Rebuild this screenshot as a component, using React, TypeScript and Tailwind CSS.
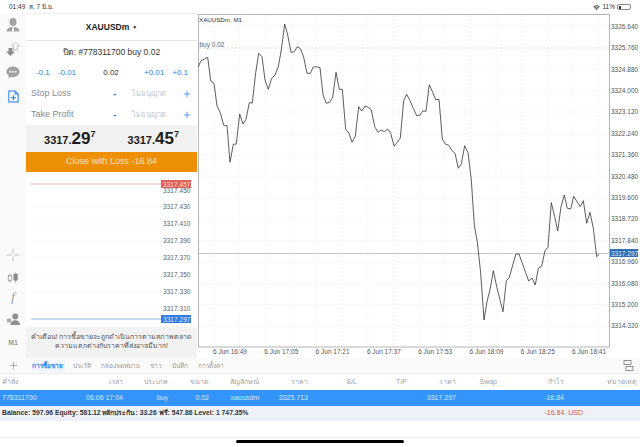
import React from 'react';
import { Plus, Wifi } from 'lucide-react';

const SANS = 'font-["Liberation_Sans",_"Noto_Sans",_sans-serif]';

// trace of the M1 line, read off the picture in three pieces
const LINE_A = [[10,200],[18,182],[28,178],[38,172],[47,242],[57,250],[66,318],[76,338],[86,376],[96,377],[105,487],[115,433],[124,432],[134,342],[144,372],[153,358],[163,308],[172,309],[182,218],[191,160],[201,170],[210,240],[220,268],[230,235],[240,225],[250,200],[259,150],[269,72],[278,105],[288,157],[298,155],[307,140],[317,147],[326,172],[336,220],[346,220],[355,201],[365,200],[375,203],[384,285],[394,310],[404,307],[413,292],[423,217],[433,268],[442,268],[452,388],[462,400],[471,427],[481,408],[491,320],[500,333],[510,318],[520,322],[529,330],[539,380],[549,397],[558,390],[568,395],[578,387],[587,400],[597,438],[607,427],[616,414],[626,302],[635,283],[645,302],[655,325],[665,347]];
const LINE_B = [[0,345],[8,333],[18,334],[28,254],[38,277],[47,299],[57,298],[67,417],[76,432],[86,436],[96,452],[105,460],[115,505],[124,492],[134,437],[144,458]];
const LINE_C = [[154,0],[163,135],[172,185],[182,280],[192,420],[201,365],[211,325],[220,272],[230,320],[240,360],[249,395],[259,302],[268,293],[278,255],[288,222],[297,222],[307,250],[317,278],[326,303],[336,294],[346,315],[355,265],[365,258],[375,212],[384,202],[394,68],[404,110],[413,153],[423,80],[433,45],[442,85],[452,87],[461,49],[471,65],[481,80],[490,62],[500,130],[510,97],[520,145],[530,230],[538,222]];

const CHART_LEFT = 198;
const CHART_TOP = 14;

const linePoints = [
  ...LINE_A.map(([x, y]) => [195 + x / 3, y / 3]),
  ...LINE_B.map(([x, y]) => [420 + x / 3, y / 3]),
  ...LINE_C.map(([x, y]) => [420 + x / 3, 180 + y / 3]),
]
  .map(([x, y]) => `${(x - CHART_LEFT).toFixed(1)},${(y - CHART_TOP).toFixed(1)}`)
  .join(' ');

const Y_LABELS = ['3326.640','3325.760','3324.880','3324.000','3323.120','3322.240','3321.360','3320.480','3319.600','3318.720','3317.840','3316.960','3316.080','3315.200','3314.320'];
const X_LABELS = ['6 Jun 16:49','6 Jun 17:05','6 Jun 17:21','6 Jun 17:37','6 Jun 17:53','6 Jun 18:09','6 Jun 18:25','6 Jun 18:41'];
const MINI_LABELS: Array<[string, number]> = [['3317.430', 35],['3317.410', 52],['3317.390', 69],['3317.370', 86],['3317.350', 103],['3317.330', 120],['3317.310', 137]];

function MainChart() {
  const vLines = Array.from({ length: 16 }, (_, i) => 16 + i * 25.65);
  return (
    <svg width="442" height="345" viewBox="0 0 442 345" className="block">
      {Y_LABELS.map((_, i) => (
        <line key={i} x1="1" x2="411" y1={12.5 + i * 21.4} y2={12.5 + i * 21.4} stroke="#eeeeee" strokeWidth="0.7" strokeDasharray="2 2" />
      ))}
      {vLines.map((x) => (
        <line key={x} x1={x} x2={x} y1="1" y2="333" stroke="#eeeeee" strokeWidth="0.7" strokeDasharray="2 2" />
      ))}
      <line x1="1" x2="411" y1="34" y2="34" stroke="#cfe3c4" strokeWidth="0.8" strokeDasharray="2 2" />
      <line x1="1" x2="411" y1="239.5" y2="239.5" stroke="#b9b9b9" strokeWidth="0.8" />
      <rect x="0.5" y="0.5" width="411" height="332.5" fill="none" stroke="#b4b4b4" />
      <polyline points={linePoints} fill="none" stroke="#333333" strokeWidth="0.8" strokeLinejoin="round" />
      <g fontSize="6.5" fill="#333333">
        <text x="1" y="7.5" fontSize="6.2">XAUUSDm, M1</text>
        <text x="1.5" y="33" fill="#666666">buy 0.02</text>
      </g>
      <g fontSize="6.5" fill="#555555">
        {Y_LABELS.map((label, i) => (
          <text key={label} x="413" y={14.8 + i * 21.4}>{label}</text>
        ))}
        {X_LABELS.map((label, i) => (
          <text key={label} x={32 + i * 51.3} y="339.8" textAnchor="middle">{label}</text>
        ))}
      </g>
      <rect x="412" y="235" width="28" height="8" fill="#2f6fb5" />
      <text x="413" y="241.8" fontSize="6.5" fill="#dbe8f6">3317.297</text>
    </svg>
  );
}

function MiniChart() {
  return (
    <svg width="171" height="155" viewBox="0 0 171 155" className="block">
      {MINI_LABELS.map(([label, y]) => (
        <line key={label} x1="8" x2="135" y1={y} y2={y} stroke="#e8e8e8" strokeWidth="0.7" strokeDasharray="1.5 2.5" />
      ))}
      <line x1="5" x2="135" y1="12" y2="12" stroke="#e8b4b0" strokeWidth="1.2" />
      <line x1="5" x2="135" y1="147" y2="147" stroke="#8fb8e0" strokeWidth="1.2" />
      <g fontSize="6.6" fill="#666666">
        <text x="137" y="20.5">3317.450</text>
        {MINI_LABELS.map(([label, y]) => (
          <text key={label} x="137" y={y + 2.4}>{label}</text>
        ))}
      </g>
      <rect x="135" y="8" width="30" height="8" fill="#e0625c" />
      <text x="137" y="14.6" fontSize="6.6" fill="#f7d5d3">3317.457</text>
      <rect x="135" y="143" width="30" height="8" fill="#2f7de0" />
      <text x="137" y="149.6" fontSize="6.6" fill="#dcebfb">3317.297</text>
    </svg>
  );
}

function Sidebar() {
  return (
    <div className="w-[26px] shrink-0 flex flex-col items-center bg-[#fafafa]">
      <svg width="14" height="14" viewBox="0 0 14 14" className="mt-[5px]" fill="#a3a3a3">
        <ellipse cx="7" cy="4" rx="3.500" ry="4" />
        <path d="M0.500 13.500c0-2.500 2-4 5-4.500h3c3 .5 5 2 5 4.500z" />
        <path d="M6.400 9h1.200l.5 4.500H5.900z" fill="#fafafa" />
      </svg>
      <svg width="14" height="14" viewBox="0 0 14 14" className="mt-[10px]">
        <path d="M2.500 6h4v3.500H9L4.500 14 0 9.500h2.500z" fill="#8c8c8c" />
        <path d="M7.500 8V4H5.500L9.500 0l4 4h-2v4z" fill="#fff" stroke="#a9a9a9" strokeWidth="0.7" />
      </svg>
      <svg width="14" height="13" viewBox="0 0 15 14" className="mt-[10px]" fill="#a0a0a0">
        <path d="M7.500 0.500c3.900 0 7 2.500 7 5.700s-3.100 5.700-7 5.700c-.8 0-1.500-.1-2.200-.3L2.500 13.500l.6-2.900C1.500 9.500.5 8 .5 6.200.5 3 3.600.5 7.500.5z" />
        <circle cx="4.500" cy="6.200" r="1" fill="#fafafa" />
        <circle cx="7.500" cy="6.200" r="1" fill="#fafafa" />
        <circle cx="10.500" cy="6.200" r="1" fill="#fafafa" />
      </svg>
      <svg width="11" height="13" viewBox="0 0 13 15" className="mt-[11px]" fill="none" stroke="#1f7fe8" strokeWidth="1.200">
        <path d="M1 1h7.500L12 4.500V14H1z" />
        <path d="M8.500 1v3.500H12" />
        <path d="M6.500 6v6M3.500 9h6" strokeWidth="1.400" />
      </svg>
      <div className="flex-1" />
      <svg width="12" height="12" viewBox="0 0 13 13" fill="none" stroke="#b0b0b0" strokeWidth="0.9">
        <path d="M6.500 0v5M6.500 8v5M0 6.500h5M8 6.500h5" />
      </svg>
      <svg width="12" height="12" viewBox="0 0 14 13" className="mt-[11px]" stroke="#8a8a8a" strokeWidth="0.8">
        <path d="M3.500 1v11" />
        <rect x="1.500" y="3.500" width="4" height="6" fill="#fff" />
        <path d="M10 0v12" />
        <rect x="8" y="2" width="4" height="7" fill="#8a8a8a" />
      </svg>
      <span className="mt-[5px] h-[15px] font-['Liberation_Serif'] italic text-[13px] leading-[15px] text-[#9a9a9a]">f</span>
      <svg width="13" height="12" viewBox="0 0 15 14" className="mt-[9px]" fill="#8e8e8e">
        <circle cx="9.500" cy="4" r="3.500" />
        <path d="M4 14c0-3.500 2-5.500 5.500-5.500s5.500 2 5.500 5.500z" />
        <rect x="0" y="6.500" width="4.500" height="4.500" fill="#a8a8a8" />
      </svg>
      <span className="mt-[14px] mb-[11px] text-[7px] leading-[8px] font-bold text-[#9a9a9a]">M1</span>
    </div>
  );
}

function LotButton({ label }: { label: string }) {
  return <span className="text-[8px] text-[#2b83ea]">{label}</span>;
}

function LevelRow({ label }: { label: string }) {
  return (
    <div className="flex items-center h-[21px] pl-[5px] pr-[3px] text-[9px]">
      <span className="w-[82px] text-[#8a8a8a]">{label}</span>
      <span className="w-[8px] text-[#2b83ea] font-bold text-[10px] leading-[10px]">-</span>
      <span className="flex-1 text-center pr-[5px] text-[#c4c4c4] text-[7.500px]">ไม่อนุญาต</span>
      <Plus size={10} strokeWidth={1.8} className="text-[#2b83ea] mr-[2px]" />
    </div>
  );
}

function Quote({ big, small }: { big: string; small: string }) {
  return (
    <span className="flex items-start font-bold text-[#1c1c1c] leading-none">
      <span className="text-[11px] mt-[5px]">3317.</span>
      <span className="text-[17px]">{big}</span>
      <span className="text-[9px]">{small}</span>
    </span>
  );
}

function OrderPanel() {
  return (
    <div className="w-[171px] shrink-0 flex flex-col bg-white border-t border-[#ececec]">
      <div className="h-[27px] shrink-0 flex items-center justify-center gap-[3px] pt-[1px] border-b border-[#e4e4e4] font-bold text-[8.500px] text-[#1c1c1c]">
        XAUUSDm <span className="text-[5px]">▼</span>
      </div>
      <div className="h-[22px] shrink-0 flex items-center justify-center text-[8.500px] text-[#333333]">
        ปิด: #778311700 buy 0.02
      </div>
      <div className="h-[20px] shrink-0 flex items-center pl-[10px] pr-[9px] justify-between">
        <div className="flex gap-[8px]"><LotButton label="-0.1" /><LotButton label="-0.01" /></div>
        <span className="text-[8px] text-[#333333] ml-[2px]">0.02</span>
        <div className="flex gap-[8px]"><LotButton label="+0.01" /><LotButton label="+0.1" /></div>
      </div>
      <LevelRow label="Stop Loss" />
      <LevelRow label="Take Profit" />
      <div className="h-[27px] shrink-0 flex items-center justify-around pl-[2px] pr-[2px] bg-[#f1f1f1]">
        <Quote big="29" small="7" />
        <Quote big="45" small="7" />
      </div>
      <div className="h-[20px] shrink-0 flex items-center justify-center bg-[#ee9007] text-[9px] text-[#fbe3c0]">
        Close with Loss -16.84
      </div>
      <MiniChart />
      <div className="flex-1 flex flex-col items-center pt-[5px] bg-[#f2f2f2] text-[7px] leading-[9px] whitespace-nowrap text-[#555555]">
        <span>คำเตือน! การซื้อขายจะถูกดำเนินการตามสภาพตลาด</span>
        <span>ความแตกต่างกับราคาที่ส่งอาจมีมาก!</span>
      </div>
    </div>
  );
}

const TABS = ['การซื้อขาย', 'ประวัติ', 'กล่องจดหมาย', 'ข่าว', 'บันทึก', 'การตั้งค่า'];

// shared column template for the trade table
const COLS = 'w-[637px] grid grid-cols-[40px_83px_45px_41px_50px_49px_49px_50px_49px_41px_67px_73px] text-right';

function TradeTable() {
  return (
    <div className="text-[7px]">
      <div className="h-[17px] flex items-center border-t border-[#ececec]">
        <div className={`${COLS} text-[#a0a0a0]`}>
          <span className="pl-[2px] text-left">คำสั่ง</span>
          <span>เวลา</span>
          <span>ประเภท</span>
          <span>ขนาด</span>
          <span>สัญลักษณ์</span>
          <span>ราคา</span>
          <span>S/L</span>
          <span>T/P</span>
          <span>ราคา</span>
          <span>Swap</span>
          <span>กำไร</span>
          <span>หมายเหตุ</span>
        </div>
      </div>
      <div className="h-[16px] flex items-center bg-[#3395fb]">
        <div className={`${COLS} text-[#d6e9fe]`}>
          <span className="pl-[2px] text-left">778311700</span>
          <span>06.06 17:04</span>
          <span>buy</span>
          <span>0.02</span>
          <span>xauusdm</span>
          <span>3325.713</span>
          <span />
          <span />
          <span>3317.297</span>
          <span />
          <span>-16.84</span>
          <span />
        </div>
      </div>
      <div className="h-[15px] flex items-center justify-between bg-[#eef2f8]">
        <span className="pl-[2px] font-bold text-[#333333] text-[6.800px]">
          Balance: 597.96 Equity: 581.12 หลักประกัน: 33.26 ฟรี: 547.86 Level: 1 747.35%
        </span>
        <span className="mr-[57px] text-[#e0524a]">-16.84&nbsp;&nbsp;USD</span>
      </div>
    </div>
  );
}

export default function App() {
  return (
    <div className={`w-[640px] h-[447px] overflow-hidden flex flex-col bg-white ${SANS}`}>
      <div className="h-[13px] shrink-0 flex items-center justify-between pt-[1px] pl-[9px] pr-[9px] text-[6.500px] text-[#333333]">
        <span>01:49&nbsp;&nbsp;ส. 7 มิ.ย.</span>
        <div className="flex items-center gap-[2px]">
          <Wifi size={7} strokeWidth={3} />
          <span>11%</span>
          <div className="w-[14px] h-[6px] rounded-[2px] border border-[#888888] p-[0.5px]">
            <div className="w-[2px] h-full bg-[#333333]" />
          </div>
        </div>
      </div>

      <div className="h-[345px] shrink-0 flex">
        <Sidebar />
        <OrderPanel />
        <div className="flex-1 pt-[1px] pl-[1px] bg-white">
          <MainChart />
        </div>
      </div>

      <div className="h-[15px] shrink-0 flex items-center bg-[#fafafa]">
        <Plus size={11} strokeWidth={1.4} className="ml-[8px] mr-[13px] text-[#888888]" />
        <div className="flex items-center text-[6.500px] text-[#9a9a9a]">
          {TABS.map((tab, i) => (
            <span key={tab} className={i === 0 ? 'pr-[2px] mr-[8px] h-[12px] flex items-center text-[#2b83ea] font-bold bg-[#f1f6fc]' : 'mr-[10px]'}>
              {tab}
            </span>
          ))}
        </div>
        <div className="flex-1" />
        <svg width="11" height="11" viewBox="0 0 11 11" fill="none" stroke="#777777" strokeWidth="0.8" className="mr-[6px]">
          <rect x="1" y="0.500" width="7" height="4" />
          <rect x="3" y="6.500" width="7" height="4" />
        </svg>
      </div>

      <TradeTable />

      <div className="flex-1 flex flex-col">
        <div className="h-[16px] shrink-0" />
        <div className="h-[3px] shrink-0 border-t border-[#eeeeee] flex justify-center pt-[2px]">
          <div className="w-[168px] h-[3px] shrink-0 rounded-full bg-black" />
        </div>
      </div>
    </div>
  );
}
